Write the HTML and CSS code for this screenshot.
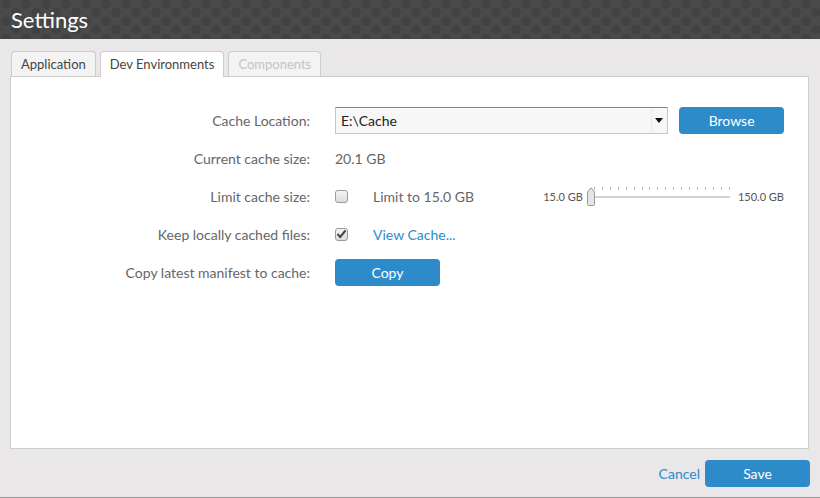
FILE: index.html
```html
<!DOCTYPE html>
<html>
<head>
<meta charset="utf-8">
<link rel="stylesheet" href="styles.css">
</head>
<body>
<div class="app">
  <header class="titlebar"><h1 class="title">Settings</h1></header>
  <main class="content">
    <nav class="tabs">
      <div class="tab">Application</div>
      <div class="tab active">Dev Environments</div>
      <div class="tab disabled">Components</div>
    </nav>
    <section class="panel">
      <div class="form">
        <div class="label">Cache Location:</div>
        <div class="value">
          <div class="select">
            <span class="select-text">E:\Cache</span>
            <span class="select-arrow"><svg width="8" height="5" viewBox="0 0 8 5"><path d="M0 0 H8 L4 5 Z" fill="#111"/></svg></span>
          </div>
          <button class="btn browse">Browse</button>
        </div>

        <div class="label">Current cache size:</div>
        <div class="value"><span class="text">20.1 GB</span></div>

        <div class="label">Limit cache size:</div>
        <div class="value">
          <span class="checkbox"></span>
          <span class="text">Limit to 15.0 GB</span>
          <div class="slider">
            <span class="slider-label">15.0 GB</span>
            <div class="slider-body">
              <div class="ticks">
                <i></i><i></i><i></i><i></i><i></i><i></i><i></i><i></i><i></i><i></i><i></i><i></i><i></i><i></i><i></i><i></i><i></i><i></i>
              </div>
              <div class="track"></div>
              <svg class="thumb" width="8" height="19" viewBox="0 0 8 19"><path d="M0.5 5 L4 0.8 L7.5 5 V17.5 Q7.5 18.5 6.5 18.5 H1.5 Q0.5 18.5 0.5 17.5 Z" fill="#e4e4e4" stroke="#999" stroke-width="1"/></svg>
            </div>
            <span class="slider-label">150.0 GB</span>
          </div>
        </div>

        <div class="label">Keep locally cached files:</div>
        <div class="value">
          <span class="checkbox checked"><svg width="11" height="10" viewBox="0 0 11 10"><path d="M1.5 5 L4.2 8 L9.5 1.5" fill="none" stroke="#444" stroke-width="2"/></svg></span>
          <a class="link">View Cache...</a>
        </div>

        <div class="label">Copy latest manifest to cache:</div>
        <div class="value"><button class="btn copy">Copy</button></div>
      </div>
    </section>
    <footer class="footer">
      <a class="link cancel">Cancel</a>
      <button class="btn save">Save</button>
    </footer>
  </main>
</div>
</body>
</html>
```

FILE: styles.css
```css
* { box-sizing: border-box; }
html, body { margin: 0; padding: 0; }
body {
  width: 820px;
  height: 498px;
  overflow: hidden;
  font-family: Lato, "Open Sans", sans-serif;
  background: #e9e7e7;
}
.app {
  height: 498px;
  display: flex;
  flex-direction: column;
  border-bottom: 1px solid #9a9a9a;
}
.titlebar {
  height: 39px;
  flex: none;
  background-color: #4a4a4a;
  background-image:
    radial-gradient(circle at 10px 4px, #424242 4.5px, transparent 5px),
    radial-gradient(circle at 0px 12.5px, #424242 4.5px, transparent 5px),
    radial-gradient(circle at 20px 12.5px, #424242 4.5px, transparent 5px);
  background-size: 20px 17px;
  background-position: -4px 0;
  display: flex;
  align-items: center;
  padding-left: 11px;
}
.title {
  margin: 0;
  color: #fff;
  font-size: 22px;
  font-weight: 400;
  line-height: 1;
  padding-top: 1px;
}
.content {
  flex: 1;
  display: flex;
  flex-direction: column;
  padding: 12px 11px 0 10px;
}
.tabs {
  display: flex;
  gap: 4px;
  padding-left: 1px;
  height: 25px;
  position: relative;
  z-index: 1;
}
.tab {
  height: 25px;
  padding: 0 9px;
  border: 1px solid #cdcdcd;
  border-bottom: none;
  border-radius: 4px 4px 0 0;
  background: #f3f3f3;
  color: #444;
  font-size: 13px;
  line-height: 24px;
}
.tab.active {
  background: #fff;
  height: 26px;
  color: #444;
}
.tab.disabled { color: #c4c4c4; }
.panel {
  height: 373px;
  background: #fff;
  border: 1px solid #cccccc;
  padding-top: 24px;
}
.form {
  display: grid;
  grid-template-columns: 299px 449px;
  column-gap: 25px;
  grid-auto-rows: 38px;
  align-items: center;
}
.label {
  text-align: right;
  color: #666;
  font-size: 14px;
}
.value {
  display: flex;
  align-items: center;
  color: #666;
  font-size: 14px;
  height: 38px;
}
.text { color: #666; }
.select {
  width: 334px;
  height: 27px;
  border: 1px solid #a8cce9;
  border-top-color: #5d8cb8;
  background: #f7f7f7;
  display: flex;
  align-items: center;
  justify-content: space-between;
}
.select-text {
  color: #222;
  font-size: 14px;
  padding-left: 5px;
}
.select-arrow {
  width: 16px;
  height: 25px;
  border-left: 1px solid #ececec;
  display: flex;
  align-items: center;
  justify-content: center;
  padding-right: 2px;
}
.btn {
  font-family: inherit;
  border: none;
  border-radius: 4px;
  background: #2e8bc9;
  color: #fff;
  font-size: 14px;
  height: 27px;
  width: 105px;
  padding: 0;
  cursor: pointer;
}
.browse { margin-left: 11px; }
.checkbox {
  width: 13px;
  height: 13px;
  border: 1px solid #9a9a9a;
  border-radius: 3px;
  background: linear-gradient(#f4f4f4, #dcdcdc);
  margin-right: 25px;
  display: flex;
  align-items: center;
  justify-content: center;
  flex: none;
}
.checkbox svg { margin-top: -1px; }
.link {
  color: #2e8bc9;
  font-size: 14px;
  cursor: pointer;
}
.slider {
  margin-left: auto;
  display: flex;
  align-items: center;
  gap: 4px;
}
.slider-label {
  font-size: 11px;
  color: #555;
}
.slider-body {
  position: relative;
  width: 143px;
  height: 20px;
  margin-right: 4px;
}
.ticks {
  position: absolute;
  left: 7px;
  right: 0;
  top: 1px;
  display: flex;
  justify-content: space-between;
}
.ticks i {
  width: 1px;
  height: 3px;
  background: #b5b5b5;
}
.track {
  position: absolute;
  left: 6px;
  right: 0;
  top: 10px;
  height: 2px;
  background: #d3d3d3;
}
.thumb {
  position: absolute;
  left: 0;
  top: 1px;
}
.footer {
  flex: 1;
  display: flex;
  align-items: center;
  justify-content: flex-end;
  gap: 5px;
  padding-top: 1px;
  margin-right: -1px;
}
.save { height: 27px; }
```
